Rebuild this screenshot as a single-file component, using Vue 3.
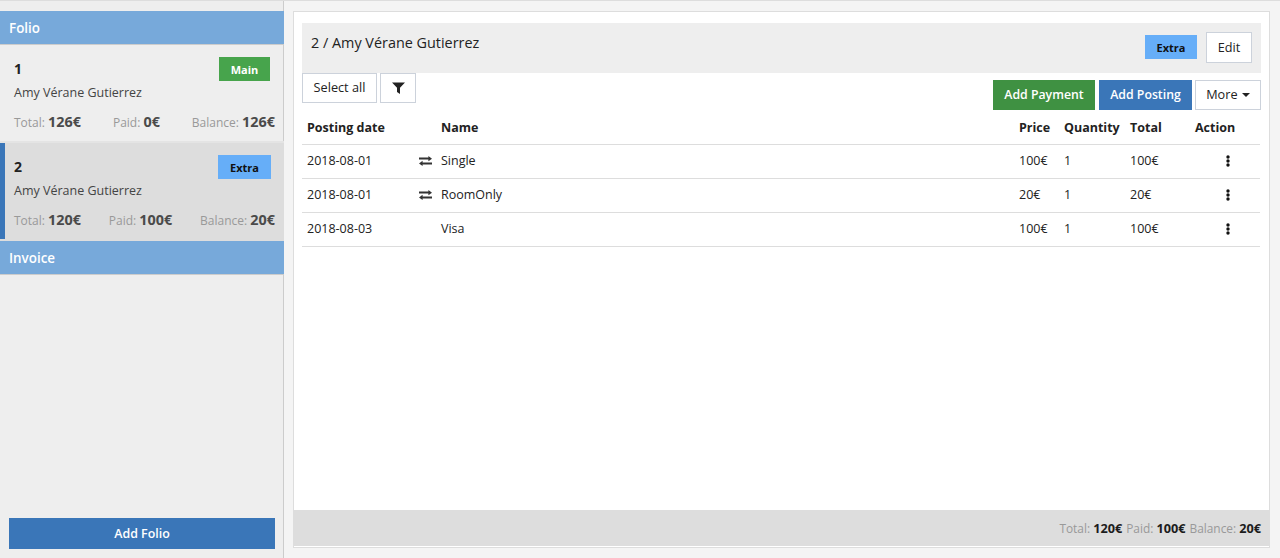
<script setup>
const folios = [
  { id: 1, tag: 'Main', tagClass: 'tag-main', total: '126€', paid: '0€', balance: '126€', active: false },
  { id: 2, tag: 'Extra', tagClass: 'tag-extra', total: '120€', paid: '100€', balance: '20€', active: true }
]
const rows = [
  { date: '2018-08-01', swap: true, name: 'Single', price: '100€', qty: 1, total: '100€' },
  { date: '2018-08-01', swap: true, name: 'RoomOnly', price: '20€', qty: 1, total: '20€' },
  { date: '2018-08-03', swap: false, name: 'Visa', price: '100€', qty: 1, total: '100€' }
]
</script>

<template>
  <div class="page">
    <aside class="side">
      <div class="side-top">
        <div class="sec">Folio</div>
        <div v-for="f in folios" :key="f.id" class="folio" :class="{ active: f.active }">
          <div class="folio-head">
            <b class="num">{{ f.id }}</b>
            <span class="tag" :class="f.tagClass">{{ f.tag }}</span>
          </div>
          <div class="guest">Amy Vérane Gutierrez</div>
          <div class="sums">
            <span>Total: <b>{{ f.total }}</b></span>
            <span>Paid: <b>{{ f.paid }}</b></span>
            <span>Balance: <b>{{ f.balance }}</b></span>
          </div>
        </div>
        <div class="sec">Invoice</div>
      </div>
      <button class="add-folio">Add Folio</button>
    </aside>
    <main class="panel">
      <div class="body">
        <div class="title-bar">
          <div class="title">2 / Amy Vérane Gutierrez</div>
          <div class="title-right">
            <span class="tag tag-extra tag-title">Extra</span>
            <button class="btn edit">Edit</button>
          </div>
        </div>
        <div class="toolbar">
          <div class="tools-left">
            <button class="btn select">Select all</button>
            <button class="btn filter" aria-label="Filter">
              <svg width="13" height="12" viewBox="0 0 13 12"><path d="M0 .4h13L8 5.8V12L5 10V5.8z" fill="#222"/></svg>
            </button>
          </div>
          <div class="tools-right">
            <button class="btn-fill green">Add Payment</button>
            <button class="btn-fill blue">Add Posting</button>
            <button class="btn more">More <i class="caret"></i></button>
          </div>
        </div>
        <table class="grid">
          <colgroup>
            <col style="width:112px" /><col style="width:22px" /><col />
            <col style="width:45px" /><col style="width:66px" /><col style="width:65px" /><col style="width:70px" />
          </colgroup>
          <thead>
            <tr><th>Posting date</th><th></th><th>Name</th><th>Price</th><th>Quantity</th><th>Total</th><th>Action</th></tr>
          </thead>
          <tbody>
            <tr v-for="(r, i) in rows" :key="i">
              <td>{{ r.date }}</td>
              <td class="icon-cell">
                <svg v-if="r.swap" width="13" height="10" viewBox="0 0 13 10" fill="#333">
                  <path d="M0 1.6h9.4V0L13 2.7 9.4 5.2V3.5H0z" />
                  <path d="M13 6.5H3.6V4.8L0 7.4 3.6 10V8.4H13z" />
                </svg>
              </td>
              <td>{{ r.name }}</td>
              <td>{{ r.price }}</td>
              <td>{{ r.qty }}</td>
              <td>{{ r.total }}</td>
              <td class="dots-cell">
                <svg width="4" height="12" viewBox="0 0 4 12" fill="#111">
                  <circle cx="2" cy="2" r="1.7" /><circle cx="2" cy="6" r="1.7" /><circle cx="2" cy="10" r="1.7" />
                </svg>
              </td>
            </tr>
          </tbody>
        </table>
      </div>
      <div class="foot">
        <span>Total: <b>120€</b></span>
        <span>Paid: <b>100€</b></span>
        <span>Balance: <b>20€</b></span>
      </div>
    </main>
  </div>
</template>

<style scoped>
.page {
  display: flex;
  height: 557px;
  border-top: 1px solid #ddd;
  background: #f4f4f4;
  font-family: "Open Sans", "Liberation Sans", sans-serif;
  font-size: 12.5px;
  color: #333;
  box-sizing: content-box;
}
.side {
  width: 283px;
  background: #eee;
  border-right: 1px solid #ccc;
  display: flex;
  flex-direction: column;
  justify-content: space-between;
  padding: 10px 0 9px;
  box-sizing: content-box;
  height: 538px;
}
.sec {
  height: 32px;
  margin-right: -1px;
  background: #77a9da;
  border-bottom: 1px solid #ccc;
  color: #fff;
  font-size: 13.4px;
  font-weight: 600;
  line-height: 33px;
  padding: 1px 0 0 9px;
}
.folio {
  height: 96px;
  padding: 12px 8px 0 14px;
  box-sizing: border-box;
}
.folio.active {
  height: 100px;
  background: linear-gradient(#3a76b8, #3a76b8) 0 0 / 5px 96px no-repeat, #ddd;
  border-top: 2px solid #e4e4e4;
  margin-right: -1px;
  padding: 12px 9px 0 14px;
}
.folio-head {
  display: flex;
  justify-content: space-between;
  align-items: center;
  height: 24px;
}
.num { font-size: 14px; font-weight: 700; color: #222; margin-bottom: 2px; }
.tag {
  display: inline-block;
  height: 24px;
  line-height: 26px;
  font-size: 11px;
  font-weight: 700;
  text-align: center;
}
.tag-main { width: 51px; background: #47a44c; color: #fff; margin-right: 5px; }
.tag-extra { width: 53px; background: #66aef8; color: #111; margin-right: 4px; }
.guest { margin-top: 2px; font-size: 12.5px; line-height: 20px; color: #444; }
.sums {
  display: flex;
  justify-content: space-between;
  margin-top: 9px;
  color: #999;
  font-size: 12px;
  line-height: 20px;
}
.sums b { font-size: 14.4px; font-weight: 700; color: #4a4a4a; }
.add-folio {
  width: 266px;
  height: 31px;
  margin-left: 9px;
  border: 0;
  padding: 0;
  background: #3a76b8;
  color: #fff;
  font: 600 12.4px "Open Sans", sans-serif;
}
.panel {
  width: 977px;
  height: 537px;
  margin: 10px 0 0 9px;
  background: #fff;
  border: 1px solid #ddd;
  box-sizing: border-box;
  display: flex;
  flex-direction: column;
  justify-content: space-between;
}
.body { padding: 11px 8px 0; }
.title-bar {
  height: 50px;
  width: 959px;
  background: #eee;
  display: flex;
  justify-content: space-between;
  box-sizing: border-box;
  padding: 9px 9px 0;
}
.title { font-size: 14.4px; line-height: 22px; color: #222; }
.title-right { display: flex; align-items: flex-start; }
.tag-title { margin: 3px 9px 0 0; width: 52px; }
.btn {
  background: #fff;
  border: 1px solid #ccd2db;
  font: 12.7px "Open Sans", sans-serif;
  color: #222;
  padding: 0 0 2px;
  box-sizing: border-box;
}
.edit { width: 46px; height: 31px; }
.toolbar { display: flex; justify-content: space-between; width: 959px; }
.tools-left { display: flex; gap: 3px; height: 30px; }
.select { width: 75px; height: 30px; }
.filter { width: 36px; height: 30px; display: flex; align-items: center; justify-content: center; padding: 0; }
.tools-right { display: flex; gap: 4px; margin-top: 7px; }
.btn-fill {
  height: 30px;
  border: 0;
  color: #fff;
  font: 600 12.3px "Open Sans", sans-serif;
  padding: 0 0 2px;
}
.green { width: 102px; background: #3f9142; }
.blue { width: 93px; background: #3a76b8; }
.more { width: 66px; height: 30px; margin-left: -1px; }
.caret {
  display: inline-block;
  width: 0;
  height: 0;
  margin-left: 1px;
  vertical-align: 2px;
  border: 4px solid transparent;
  border-top-color: #222;
  border-bottom: 0;
}
.grid {
  table-layout: fixed;
  border-collapse: collapse;
  width: 958px;
  margin-top: 1px;
  color: #222;
  font-size: 12.5px;
}
th, td { padding: 0 0 0 5px; text-align: left; border-bottom: 1px solid #ddd; }
th { height: 33px; font-size: 12.5px; font-weight: 700; color: #222; }
td { height: 34px; padding-bottom: 2px; box-sizing: border-box; }
.icon-cell svg { display: block; margin-top: 1px; }
.dots-cell { padding-left: 36px; }
.dots-cell svg { display: block; }
.foot {
  height: 36px;
  margin-bottom: 1px;
  background: #ddd;
  display: flex;
  justify-content: flex-end;
  align-items: center;
  gap: 4px;
  padding-right: 8px;
  color: #999;
  font-size: 11.9px;
}
.foot b { color: #1c1c1c; font-weight: 700; font-size: 12.7px; }
</style>

<style>
html, body { margin: 0; overflow: hidden; }
</style>
